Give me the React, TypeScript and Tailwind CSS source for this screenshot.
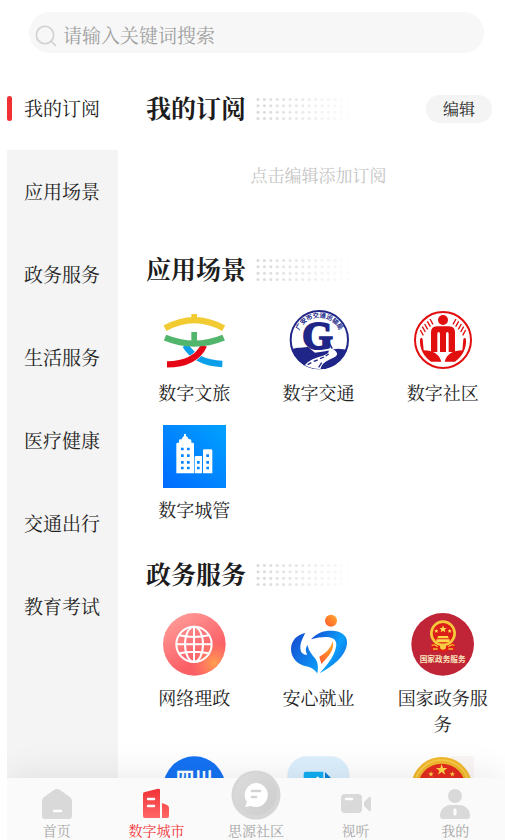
import type { ReactNode } from 'react'

type Service = { name: string; icon: ReactNode; hideLabel?: boolean }

const categories = ['我的订阅', '应用场景', '政务服务', '生活服务', '医疗健康', '交通出行', '教育考试']

function CultureIcon() {
  return (
    <svg viewBox="0 0 189 189" className="size-full" fill="none" strokeWidth="19">
      <path d="M85 18h17v20H85z" fill="#f2ca32" />
      <path d="M6 61Q94 12 182 61" stroke="#f2ca32" />
      <path d="M67 112Q98 164 178 168" stroke="#0a9fe8" />
      <path d="M123 112C106 148 72 169 12 169" stroke="#fff" strokeWidth="22" />
      <path d="M123 112C106 148 72 169 12 169" stroke="#e60514" />
      <path d="M6 89Q94 125 182 89" stroke="#52b56c" />
      <path d="M85 72h17v32H85z" fill="#52b56c" />
    </svg>
  )
}

function TrafficIcon() {
  return (
    <svg viewBox="0 0 189 189" className="size-full">
      <defs>
        <path id="traffic-arc" d="M32 106A66 66 0 1 1 162 106" />
        <clipPath id="traffic-clip">
          <circle cx="97" cy="95" r="88" />
        </clipPath>
      </defs>
      <circle cx="97" cy="95" r="86" fill="none" stroke="#202688" strokeWidth="6" />
      <g clipPath="url(#traffic-clip)">
        <path d="M5 132C22 114 40 122 62 116L84 134C104 132 126 128 140 124C156 120 170 124 190 128V190H5Z" fill="#202688" />
        <path d="M46 180C66 152 88 150 108 143C130 135 128 128 119 120L127 118C150 128 160 140 138 150C116 160 102 166 100 188H46Z" fill="#fff" />
        <path d="M62 170l11-6M80 160l12-4M99 152l12-5M116 144l9-6M104 164l-9 14" stroke="#202688" strokeWidth="4" />
      </g>
      <text x="92" y="122" textAnchor="middle" fontSize="118" fontWeight="700" fill="#202688" stroke="#202688" strokeWidth="6" fontFamily="Liberation Serif, serif">G</text>
      <path d="M110 122l13-24 13 24M115 112h16" stroke="#202688" strokeWidth="4" fill="none" />
      <text fontSize="19" fontWeight="700" fill="#202688" fontFamily="Noto Sans CJK SC, sans-serif">
        <textPath href="#traffic-arc" startOffset="50%" textAnchor="middle">广安市交通运输局</textPath>
      </text>
    </svg>
  )
}

function CommunityIcon() {
  return (
    <svg viewBox="0 0 189 189" className="size-full" fill="#e20f0f">
      <circle cx="96" cy="96" r="84" fill="none" stroke="#e20f0f" strokeWidth="6" />
      <circle cx="96" cy="36" r="15" />
      <path d="M60 132V73q0-18 18-18h36q18 0 18 18v59h-19V78q0-6-4-6t-4 6v54H87V78q0-6-4-6t-4 6v54Z" />
      <path d="M27 94c2-5 7-5 8 0l3 33c27 0 47 11 53 34H60C38 146 25 122 27 94Z" />
      <path d="M165 94c-2-5-7-5-8 0l-3 33c-27 0-47 11-53 34h31c22-15 35-39 33-67Z" />
      <path
        d="M28 66l9 16M34 56l9 16M41 48l9 16M49 40l9 16M57 33l9 16M164 66l-9 16M158 56l-9 16M151 48l-9 16M143 40l-9 16M135 33l-9 16"
        stroke="#e20f0f"
        strokeWidth="4"
      />
    </svg>
  )
}

function CityIcon() {
  return (
    <svg viewBox="0 0 189 189" className="size-full">
      <defs>
        <linearGradient id="city-bg" x1="0" y1="1" x2="1" y2="0">
          <stop stopColor="#006aff" />
          <stop offset="1" stopColor="#00a2ff" />
        </linearGradient>
      </defs>
      <path d="M0 0h189v189H0z" fill="url(#city-bg)" />
      <path d="M40 145V57q0-4 4-4h4V47q0-4 4-4h4q2-8 7-10V28q3-4 6 0v5q6 2 8 10h4q4 0 4 4v6h4q4 0 4 4v88Z" fill="#fff" />
      <path d="M95 145V97q0-4 4-4h18v52ZM120 145V77q0-4 4-4h20q4 0 4 4v68Z" fill="#fff" />
      <path
        d="M54 68h8v8h-8zM72 68h8v8h-8zM54 88h8v8h-8zM72 88h8v8h-8zM54 108h8v8h-8zM72 108h8v8h-8zM54 125h8v8h-8zM72 125h8v8h-8zM102 108h8v8h-8zM102 125h8v8h-8zM130 88h8v8h-8zM130 108h8v8h-8zM130 125h8v8h-8z"
        fill="#0584ff"
      />
    </svg>
  )
}

function GlobeIcon() {
  return (
    <svg viewBox="0 0 189 189" className="size-full">
      <defs>
        <linearGradient id="globe-bg" x1="0" y1="0" x2=".6" y2="1">
          <stop stopColor="#ffa5a0" />
          <stop offset=".8" stopColor="#fb5f66" />
        </linearGradient>
        <radialGradient id="globe-glow" cx=".82" cy=".8" r=".35">
          <stop stopColor="#ff9f50" />
          <stop offset="1" stopColor="#ff8a5c" stopOpacity="0" />
        </radialGradient>
      </defs>
      <circle cx="94" cy="94" r="94" fill="url(#globe-bg)" />
      <circle cx="94" cy="94" r="94" fill="url(#globe-glow)" />
      <g fill="none" stroke="#fff" strokeWidth="6">
        <circle cx="93" cy="94" r="53" />
        <ellipse cx="93" cy="94" rx="27" ry="53" />
        <path d="M93 41v106M40 94h106M49 67q44 10 88 0M49 121q44-10 88 0" />
      </g>
    </svg>
  )
}

function JobIcon() {
  return (
    <svg viewBox="0 0 189 189" className="size-full">
      <defs>
        <linearGradient id="job-left" x1="0" y1="0" x2="1" y2="1">
          <stop stopColor="#1648cf" />
          <stop offset="1" stopColor="#0ba0fa" />
        </linearGradient>
        <linearGradient id="job-right" x1="0" y1="0" x2="1" y2=".7">
          <stop stopColor="#1547cf" />
          <stop offset=".65" stopColor="#0ba0fa" />
          <stop offset="1" stopColor="#146ee4" />
        </linearGradient>
        <linearGradient id="job-orange" x1="0" y1="1" x2="1" y2="0">
          <stop stopColor="#ff5a2e" />
          <stop offset="1" stopColor="#ffa928" />
        </linearGradient>
      </defs>
      <circle cx="132" cy="23" r="18" fill="url(#job-orange)" />
      <path
        d="M55 60C31 64 12 83 12 108C12 137 34 155 57 160C76 164 85 172 91 182C94 165 94 149 84 136C73 123 63 109 62 96C55 104 55 116 61 125C53 127 43 122 41 112C37 94 46 77 55 60Z"
        fill="url(#job-left)"
      />
      <path
        d="M72 79C91 57 117 51 143 54C168 57 183 71 180 94C175 131 137 160 98 181C126 151 148 119 148 93C147 72 121 65 72 79Z"
        fill="url(#job-right)"
      />
      <path d="M137 85C143 108 129 127 103 153L97 131C117 121 130 108 137 85Z" fill="url(#job-orange)" />
    </svg>
  )
}

function StateIcon() {
  return (
    <svg viewBox="0 0 189 189" className="size-full">
      <circle cx="95" cy="94" r="94" fill="#bf2536" />
      <path d="M62 90h68l2 26-18-6-10 8H88l-10-8-18 6z" fill="#e11b16" />
      <circle cx="96" cy="61" r="35" fill="#db1e18" stroke="#f6c83b" strokeWidth="8" />
      <path d="M96 37l3 8h8l-6 5 2 8-7-5-7 5 2-8-6-5h8zM76 48l2 4h4l-3 3 1 4-4-2-4 2 1-4-3-3h4zM116 48l2 4h4l-3 3 1 4-4-2-4 2 1-4-3-3h4z" fill="#ffe052" />
      <path d="M82 69h28l4 7H78zM76 79h40v9H76z" fill="#ffd84a" />
      <path d="M62 97q10-4 18 4M130 97q-10-4-18 4M66 108h14M112 108h14" stroke="#f3bd35" strokeWidth="4" fill="none" />
      <circle cx="96" cy="101" r="9" fill="#f7cd45" />
      <text x="95" y="147" textAnchor="middle" fontSize="23" fontWeight="700" fill="#fbe5bd" fontFamily="Noto Sans CJK SC, sans-serif">国家政务服务</text>
    </svg>
  )
}

function SichuanIcon() {
  return (
    <svg viewBox="0 0 189 189" className="size-full">
      <circle cx="94" cy="94" r="93" fill="#1472f2" />
      <text x="94" y="87" textAnchor="middle" fontSize="56" fontWeight="700" fill="#fff" fontFamily="Noto Sans CJK SC, sans-serif">四川</text>
    </svg>
  )
}

function DocumentIcon() {
  return (
    <svg viewBox="0 0 189 189" className="size-full">
      <rect x="1" y="1" width="187" height="187" rx="58" fill="#dceffd" />
      <path d="M50 53q0-6 6-6h53v29h27v66H50z" fill="#10aef2" />
      <path d="M114 48l25 25h-25z" fill="#087fd8" />
      <path d="M84 72l8-8 8 8" stroke="#fff" strokeWidth="5" fill="none" />
    </svg>
  )
}

function EmblemIcon() {
  return (
    <svg viewBox="0 0 189 189" className="size-full">
      <path d="M120 0h69v189h-69z" fill="#f9f6f5" />
      <circle cx="92" cy="94" r="81" fill="#e42a20" stroke="#f0b62c" strokeWidth="20" />
      <circle cx="92" cy="94" r="82" fill="none" stroke="#f8cc4c" strokeWidth="5" />
      <path d="M92 24l4 12h13l-10 8 4 12-11-8-11 8 4-12-10-8h13zM60 46l2 6h6l-5 4 2 6-5-4-5 4 2-6-5-4h6zM124 46l2 6h6l-5 4 2 6-5-4-5 4 2-6-5-4h6z" fill="#ffd54a" />
    </svg>
  )
}

const scenes: Service[] = [
  { name: '数字文旅', icon: <CultureIcon /> },
  { name: '数字交通', icon: <TrafficIcon /> },
  { name: '数字社区', icon: <CommunityIcon /> },
  { name: '数字城管', icon: <CityIcon /> },
]

const government: Service[] = [
  { name: '网络理政', icon: <GlobeIcon /> },
  { name: '安心就业', icon: <JobIcon /> },
  { name: '国家政务服务', icon: <StateIcon /> },
  { name: '四川', icon: <SichuanIcon />, hideLabel: true },
  { name: '文件', icon: <DocumentIcon />, hideLabel: true },
  { name: '政务', icon: <EmblemIcon />, hideLabel: true },
]

function Dots() {
  const cols = Array.from({ length: 15 }, (_, i) => i)
  return (
    <svg width="96" height="24" viewBox="0 0 96 24" className="ml-2.5" aria-hidden="true">
      {cols.map((c) =>
        [0, 1, 2, 3].map((r) => (
          <circle key={`${c}-${r}`} cx={2 + c * 6.4} cy={2.4 + r * 6.4} r="1.5" fill="#d9d9d9" opacity={1 - c / 15} />
        ))
      )}
    </svg>
  )
}

function SectionTitle(props: { title: string; children?: ReactNode }) {
  return (
    <div className="flex h-9 items-center pl-3.5 pr-[13px]">
      <h2 className="pt-0.5 text-[25px] leading-9 font-bold text-[#1c1c1c]">{props.title}</h2>
      <Dots />
      {props.children}
    </div>
  )
}

function ServiceGrid({ items }: { items: Service[] }) {
  return (
    <div className="mt-5 grid grid-cols-3 gap-y-[18px]">
      {items.map((item) => (
        <button key={item.name} type="button" aria-label={item.name} className="flex flex-col items-center">
          <span className="block size-[63px]">{item.icon}</span>
          {!item.hideLabel && (
            <span className="mt-2.5 w-[92px] text-lg leading-[26px] text-[#222]">{item.name}</span>
          )}
        </button>
      ))}
    </div>
  )
}

function TabBar() {
  const tab = 'flex flex-1 flex-col items-center justify-end gap-1 text-[14px] leading-4'
  return (
    <nav className="relative ml-[7px] flex h-[62px] shrink-0 bg-[#fafafa] text-[#a6a6a6] shadow-[0_-2px_36px_rgba(0,0,0,0.09)] [clip-path:inset(-40px_0_0_0)]">
      <a href="#home" className={tab}>
        <svg width="32" height="32" viewBox="0 0 32 32" className="shrink-0">
          <path d="M3 9L13 2q3-2 6 0l10 7q2 2 2 4v15q0 3-3 3H4q-3 0-3-3V13q0-2 2-4z" fill="#d9d9d9" />
          <path d="M13 23h7" stroke="#fff" strokeWidth="2.5" strokeLinecap="round" />
        </svg>
        首页
      </a>
      <a href="#city" aria-current="page" className={tab + ' text-[#f03539]'}>
        <svg width="32" height="32" viewBox="0 0 32 32" className="shrink-0">
          <defs>
            <linearGradient id="tab-city" x1="0" y1="0" x2="0" y2="1">
              <stop stopColor="#f03236" />
              <stop offset="1" stopColor="#ff6667" />
            </linearGradient>
          </defs>
          <path d="M3 6q0-2 2-2l12-3q3-1 3 1v28H5q-2 0-2-2zM22 15l5 2q2 1 2 3v8q0 2-2 2h-5z" fill="url(#tab-city)" />
          <path d="M8 11h6M8 18h6" stroke="#fff" strokeWidth="2.5" strokeLinecap="round" />
        </svg>
        数字城市
      </a>
      <a href="#community" className={tab}>
        <svg width="50" height="50" viewBox="0 0 50 50" className="shrink-0">
          <defs>
            <linearGradient id="tab-chat" x1="0" y1="0" x2="1" y2="1">
              <stop stopColor="#dcdcdc" />
              <stop offset="1" stopColor="#cdcdcd" />
            </linearGradient>
          </defs>
          <circle cx="25" cy="25" r="24.5" fill="#d6d6d6" />
          <circle cx="25" cy="24" r="21" fill="url(#tab-chat)" />
          <path d="M25 13a12 12 0 1 1-5 23l-6 1 2-5a12 12 0 0 1 9-19z" fill="#fff" />
          <path d="M21 21h8M21 27h4" stroke="#d2d2d2" strokeWidth="2.5" strokeLinecap="round" />
        </svg>
        思源社区
      </a>
      <a href="#video" className={tab}>
        <svg width="32" height="32" viewBox="0 0 32 32" className="shrink-0">
          <rect x="1" y="6" width="21" height="19" rx="4" fill="#d9d9d9" />
          <path d="M24 14l5-5q2-1 2 1v12q0 2-2 1l-5-5z" fill="#d9d9d9" />
          <path d="M6 11h6" stroke="#fff" strokeWidth="2.5" strokeLinecap="round" />
        </svg>
        视听
      </a>
      <a href="#me" className={tab}>
        <svg width="32" height="32" viewBox="0 0 32 32" className="shrink-0">
          <circle cx="16" cy="8" r="7" fill="#d9d9d9" />
          <path d="M1 28c0-7 5-11 11-11h8c6 0 11 4 11 11q0 3-3 3H4q-3 0-3-3z" fill="#d9d9d9" />
          <path d="M16 22v4" stroke="#fff" strokeWidth="3" strokeLinecap="round" />
        </svg>
        我的
      </a>
    </nav>
  )
}

export default function App() {
  return (
    <div className="flex h-screen flex-col overflow-hidden bg-white font-['Liberation_Serif','Noto_Serif_CJK_SC','Noto_Sans_CJK_SC',serif]">
      <header className="shrink-0 pt-3 pr-[21px] pb-3.5 pl-[29px]">
        <label className="flex h-[41px] items-center gap-1.5 rounded-full bg-[#f7f7f7] pl-1.5">
          <svg width="22" height="22" viewBox="0 0 22 22" fill="none" stroke="#cfcfcf" strokeWidth="1.5" className="mt-1.5" aria-hidden="true">
            <circle cx="10" cy="10" r="8.7" />
            <path d="M16 16l4.5 4.5" strokeLinecap="round" />
          </svg>
          <input
            type="search"
            aria-label="搜索"
            placeholder="请输入关键词搜索"
            className="min-w-0 flex-1 bg-transparent pt-2 text-[19px] leading-7 outline-none placeholder:text-[#a0a0a0]"
          />
        </label>
      </header>

      <div className="flex min-h-0 flex-1">
        <aside className="ml-[7px] w-[111px] shrink-0 bg-[#f4f4f4]">
          {categories.map((name, i) => (
            <button
              key={name}
              type="button"
              className={
                i === 0
                  ? 'flex h-[83px] w-full items-center gap-3 bg-white text-[19px] text-[#222]'
                  : 'flex h-[83px] w-full items-center pl-[17px] text-[19px] text-[#222]'
              }
            >
              {i === 0 && <span className="h-[25px] w-[5px] rounded-full bg-[#f03033]" />}
              <span className="pt-1">{name}</span>
            </button>
          ))}
        </aside>

        <main className="min-w-0 flex-1 overflow-y-auto pt-6 pl-3.5 [scrollbar-width:none]">
          <section className="pb-[33px]">
            <SectionTitle title="我的订阅">
              <button type="button" className="ml-auto h-7 rounded-full bg-[#f4f4f4] px-[17px] pt-0.5 text-base text-[#222]">
                编辑
              </button>
            </SectionTitle>
            <p className="pt-[37px] pb-[29px] text-center text-[17px] leading-[26px] text-[#c4c4c4]">点击编辑添加订阅</p>
          </section>
          <section className="pb-[33px]">
            <SectionTitle title="应用场景" />
            <ServiceGrid items={scenes} />
          </section>
          <section className="pb-[33px]">
            <SectionTitle title="政务服务" />
            <ServiceGrid items={government} />
          </section>
        </main>
      </div>

      <TabBar />
    </div>
  )
}
